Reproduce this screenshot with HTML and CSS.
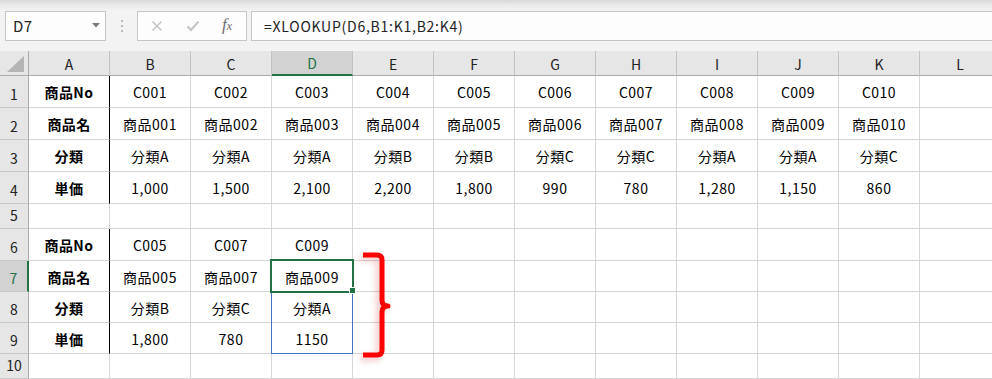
FILE: index.html
```html
<!DOCTYPE html>
<html lang="ja">
<head>
<meta charset="utf-8">
<title>XLOOKUP</title>
<link rel="stylesheet" href="styles.css">
</head>
<body>
<div class="app">
  <div class="toolbar">
    <div class="namebox">
      <span class="name">D7</span>
      <svg class="caret" width="8" height="5" viewBox="0 0 8 5"><path d="M0 0H8L4 4.5Z" fill="#7b7b7b"/></svg>
    </div>
    <div class="grip"><span></span><span></span><span></span></div>
    <div class="fxbox">
      <svg class="ico" width="12" height="12" viewBox="0 0 12 12"><path d="M1.5 1.5L10.5 10.5M10.5 1.5L1.5 10.5" stroke="#c4c4c4" stroke-width="1.5" fill="none"/></svg>
      <svg class="ico" width="14" height="12" viewBox="0 0 14 12"><path d="M1.5 6.5L5 10L12.5 1.5" stroke="#c4c4c4" stroke-width="2" fill="none"/></svg>
      <span class="fx"><i>f</i><i class="x">x</i></span>
    </div>
    <div class="formula">=XLOOKUP(D6,B1:K1,B2:K4)</div>
  </div>

  <div class="sheet">
    <div class="grid">
      <!-- header row -->
      <div class="corner"><svg width="18" height="16" viewBox="0 0 18 16"><path d="M17 0V16H0Z" fill="#b4b4b4"/></svg></div>
      <div class="ch">A</div><div class="ch">B</div><div class="ch">C</div><div class="ch active">D</div><div class="ch">E</div><div class="ch">F</div><div class="ch">G</div><div class="ch">H</div><div class="ch">I</div><div class="ch">J</div><div class="ch">K</div><div class="ch">L</div>

      <!-- row 1 -->
      <div class="rh">1</div>
      <div class="c b sep">商品No</div><div class="c">C001</div><div class="c">C002</div><div class="c">C003</div><div class="c">C004</div><div class="c">C005</div><div class="c">C006</div><div class="c">C007</div><div class="c">C008</div><div class="c">C009</div><div class="c">C010</div><div class="c"></div>

      <!-- row 2 -->
      <div class="rh">2</div>
      <div class="c b sep">商品名</div><div class="c">商品001</div><div class="c">商品002</div><div class="c">商品003</div><div class="c">商品004</div><div class="c">商品005</div><div class="c">商品006</div><div class="c">商品007</div><div class="c">商品008</div><div class="c">商品009</div><div class="c">商品010</div><div class="c"></div>

      <!-- row 3 -->
      <div class="rh">3</div>
      <div class="c b sep">分類</div><div class="c">分類A</div><div class="c">分類A</div><div class="c">分類A</div><div class="c">分類B</div><div class="c">分類B</div><div class="c">分類C</div><div class="c">分類C</div><div class="c">分類A</div><div class="c">分類A</div><div class="c">分類C</div><div class="c"></div>

      <!-- row 4 -->
      <div class="rh">4</div>
      <div class="c b sep">単価</div><div class="c">1,000</div><div class="c">1,500</div><div class="c">2,100</div><div class="c">2,200</div><div class="c">1,800</div><div class="c">990</div><div class="c">780</div><div class="c">1,280</div><div class="c">1,150</div><div class="c">860</div><div class="c"></div>

      <!-- row 5 -->
      <div class="rh">5</div>
      <div class="c"></div><div class="c"></div><div class="c"></div><div class="c"></div><div class="c"></div><div class="c"></div><div class="c"></div><div class="c"></div><div class="c"></div><div class="c"></div><div class="c"></div><div class="c"></div>

      <!-- row 6 -->
      <div class="rh">6</div>
      <div class="c b sep">商品No</div><div class="c">C005</div><div class="c">C007</div><div class="c">C009</div><div class="c"></div><div class="c"></div><div class="c"></div><div class="c"></div><div class="c"></div><div class="c"></div><div class="c"></div><div class="c"></div>

      <!-- row 7 -->
      <div class="rh active">7</div>
      <div class="c b sep">商品名</div><div class="c">商品005</div><div class="c">商品007</div>
      <div class="c sel">商品009<div class="range"></div><div class="cursor"></div><div class="handle"></div></div>
      <div class="c"></div><div class="c"></div><div class="c"></div><div class="c"></div><div class="c"></div><div class="c"></div><div class="c"></div><div class="c"></div>

      <!-- row 8 -->
      <div class="rh">8</div>
      <div class="c b sep">分類</div><div class="c">分類B</div><div class="c">分類C</div><div class="c">分類A</div><div class="c"></div><div class="c"></div><div class="c"></div><div class="c"></div><div class="c"></div><div class="c"></div><div class="c"></div><div class="c"></div>

      <!-- row 9 -->
      <div class="rh">9</div>
      <div class="c b sep">単価</div><div class="c">1,800</div><div class="c">780</div><div class="c">1150</div><div class="c"></div><div class="c"></div><div class="c"></div><div class="c"></div><div class="c"></div><div class="c"></div><div class="c"></div><div class="c"></div>

      <!-- row 10 -->
      <div class="rh">10</div>
      <div class="c"></div><div class="c"></div><div class="c"></div><div class="c"></div><div class="c"></div><div class="c"></div><div class="c"></div><div class="c"></div><div class="c"></div><div class="c"></div><div class="c"></div><div class="c"></div>
    </div>

    <svg class="brace" width="40" height="120" viewBox="0 0 40 120">
      <path d="M8 9H22Q27 9 27 14V54Q27 60 33 60Q27 60 27 66V104Q27 109 22 109H8" fill="none" stroke="#ff0000" stroke-width="5" stroke-linejoin="round"/>
    </svg>
  </div>
</div>
</body>
</html>
```
FILE: styles.css
```css
* { box-sizing: border-box; }

html, body {
  margin: 0;
  padding: 0;
  background: #ffffff;
}

body {
  width: 992px;
  height: 379px;
  overflow: hidden;
  font-family: "Noto Sans CJK JP", "Noto Sans", sans-serif;
  font-size: 14px;
  color: #000;
}

.app {
  display: flex;
  flex-direction: column;
  width: 992px;
  height: 379px;
  overflow: hidden;
}

/* ---------- toolbar ---------- */
.toolbar {
  height: 51px;
  flex: none;
  display: flex;
  align-items: flex-start;
  padding: 11px 0 0 5px;
  background: linear-gradient(#d9d9d9 0px, #ececec 6px, #f3f3f3 11px);
}

.namebox {
  width: 101px;
  height: 30px;
  background: #fdfdfd;
  border: 1px solid #c6c6c6;
  display: flex;
  align-items: center;
  justify-content: space-between;
  padding: 0 5px 0 7px;
}

.name {
  font-family: "Noto Sans CJK JP", sans-serif;
  font-size: 15px;
  color: #222;
  line-height: 20px;
  letter-spacing: 0.5px;
}

.caret { margin-top: -2px; }

.grip {
  width: 31px;
  height: 30px;
  display: flex;
  flex-direction: column;
  align-items: center;
  justify-content: center;
  gap: 3px;
}

.grip span {
  width: 2px;
  height: 2px;
  background: #b9b9b9;
}

.fxbox {
  width: 110px;
  height: 30px;
  background: #fdfdfd;
  border: 1px solid #c6c6c6;
  display: flex;
  align-items: center;
  padding: 0 0 0 13px;
}

.fxbox .ico:first-child { margin-right: 23px; }
.fxbox .ico:nth-child(2) { margin-right: 22px; }

.fx {
  font-family: "Liberation Serif", serif;
  color: #6d6d6d;
  font-size: 17px;
  line-height: 20px;
  margin-top: -2px;
}

.fx i { font-style: italic; }
.fx .x { font-size: 12px; }

.formula {
  flex: 1;
  height: 30px;
  margin-left: 4px;
  margin-right: -2px;
  background: #fdfdfd;
  border: 1px solid #c6c6c6;
  padding-left: 12px;
  display: flex;
  align-items: center;
  font-size: 14px;
  color: #222;
  letter-spacing: 0.75px;
}

/* ---------- sheet ---------- */
.sheet {
  position: relative;
  flex: 1;
  overflow: hidden;
  background: #fff;
}

.grid {
  display: grid;
  grid-template-columns: 29px repeat(12, 81px);
  grid-template-rows: 25px 32px 32px 32px 32px 25px 32px 31px 31px 31px 25px;
}

.corner {
  background: #e6e6e6;
  border-right: 1px solid #ababab;
  border-bottom: 1px solid #ababab;
  display: flex;
  align-items: flex-end;
  justify-content: flex-end;
  padding: 0 3px 3px 0;
}

.ch {
  background: #e6e6e6;
  border-right: 1px solid #c3c3c3;
  border-bottom: 1px solid #ababab;
  display: flex;
  align-items: center;
  justify-content: center;
  color: #222;
  font-size: 14px;
  padding-top: 1px;
}

.ch.active {
  background: #d2d2d2;
  color: #217346;
  border-bottom: 2px solid #217346;
}

.rh {
  background: #e6e6e6;
  border-right: 1px solid #ababab;
  border-bottom: 1px solid #c8c8c8;
  display: flex;
  align-items: flex-end;
  justify-content: center;
  padding-bottom: 3px;
  color: #222;
  font-size: 14px;
  line-height: 20px;
}

.rh.active {
  background: #d2d2d2;
  color: #217346;
  border-right: 2px solid #217346;
}

.c {
  border-right: 1px solid #d6d6d6;
  border-bottom: 1px solid #d6d6d6;
  display: flex;
  align-items: center;
  justify-content: center;
  white-space: nowrap;
  line-height: 20px;
  padding-top: 1px;
  letter-spacing: 0.5px;
}

.c.b { font-weight: bold; letter-spacing: 0.4px; }
.c.sep { border-right-color: #000; }

.c.sel { position: relative; }

.range {
  position: absolute;
  left: -1px;
  top: -1px;
  width: 82px;
  height: 94px;
  border: 1px solid #4472c4;
  pointer-events: none;
}

.cursor {
  position: absolute;
  left: -2px;
  top: -2px;
  width: 84px;
  height: 34px;
  border: 2px solid #217346;
}

.handle {
  position: absolute;
  left: 77px;
  top: 26px;
  width: 7px;
  height: 7px;
  background: #217346;
  border: 1px solid #fff;
}

.brace {
  position: absolute;
  left: 355px;
  top: 195px;
  filter: drop-shadow(-3px 3px 3px rgba(200, 0, 0, 0.25));
}
```
